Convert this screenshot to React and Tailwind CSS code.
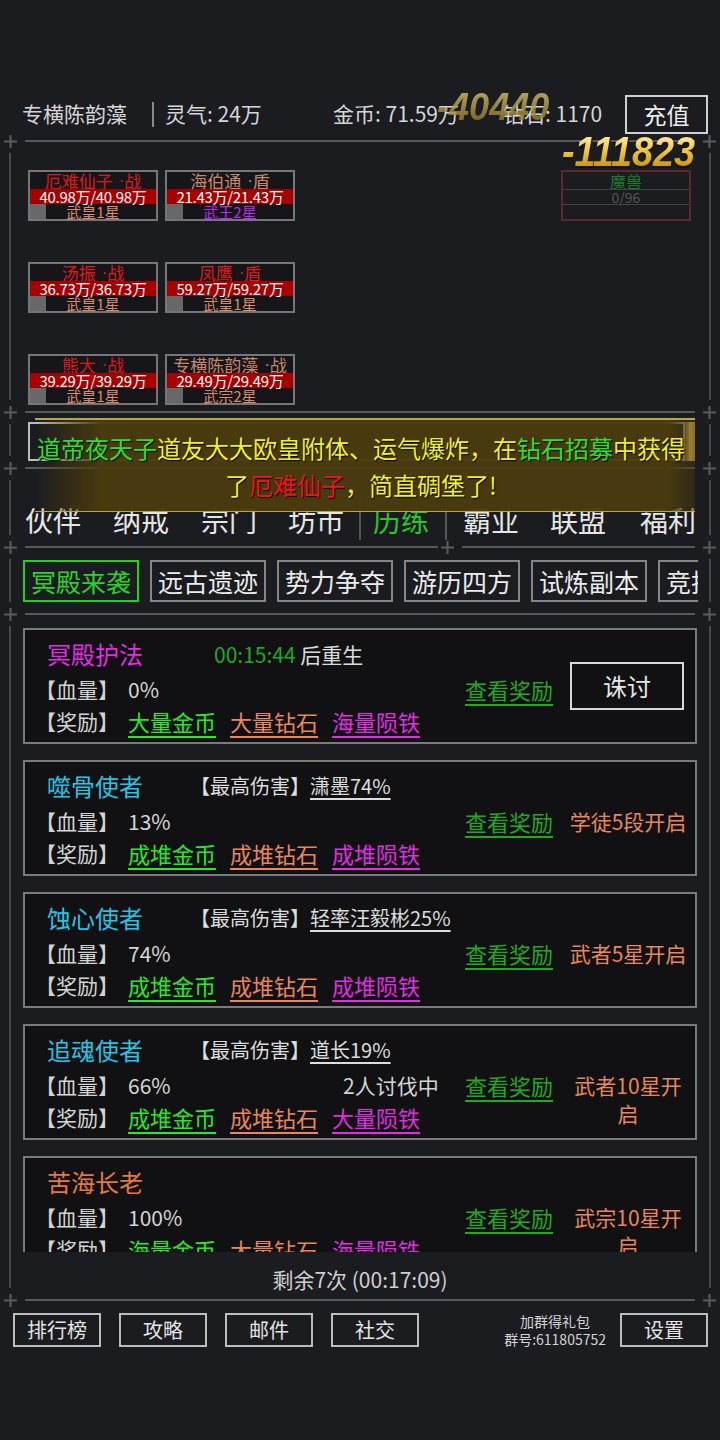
import React from "react";

const RED = "text-[#e01818]";
const TAN = "text-[#c9876a]";
const RANK = "text-[#d98b6b]";

const PARTY = [
  { name: "厄难仙子", role: "战", nameColor: RED, hp: "40.98万/40.98万", rank: "武皇1星", rankColor: RANK },
  { name: "海伯通", role: "盾", nameColor: TAN, hp: "21.43万/21.43万", rank: "武王2星", rankColor: "text-[#b52ee6]" },
  { name: "汤振", role: "战", nameColor: RED, hp: "36.73万/36.73万", rank: "武皇1星", rankColor: RANK },
  { name: "凤鹰", role: "盾", nameColor: RED, hp: "59.27万/59.27万", rank: "武皇1星", rankColor: RANK },
  { name: "熊大", role: "战", nameColor: RED, hp: "39.29万/39.29万", rank: "武皇1星", rankColor: RANK },
  { name: "专横陈韵藻", role: "战", nameColor: TAN, hp: "29.49万/29.49万", rank: "武宗2星", rankColor: RANK },
];

const GREEN = "text-[#25ea25] decoration-[#25ea25]";
const SALMON = "text-[#e8875a] decoration-[#e8875a]";
const MAGENTA = "text-[#e02ee0] decoration-[#e02ee0]";
const CYAN = "text-[#27c4e4]";

const BOSSES = [
  {
    title: "冥殿护法",
    color: "text-[#e02ee0]",
    timer: "00:15:44",
    hp: "0%",
    rewards: [["大量金币", GREEN], ["大量钻石", SALMON], ["海量陨铁", MAGENTA]],
    button: "诛讨",
  },
  {
    title: "噬骨使者",
    color: CYAN,
    top: "潇墨74%",
    hp: "13%",
    rewards: [["成堆金币", GREEN], ["成堆钻石", SALMON], ["成堆陨铁", MAGENTA]],
    status: "学徒5段开启",
  },
  {
    title: "蚀心使者",
    color: CYAN,
    top: "轻率汪毅彬25%",
    hp: "74%",
    rewards: [["成堆金币", GREEN], ["成堆钻石", SALMON], ["成堆陨铁", MAGENTA]],
    status: "武者5星开启",
  },
  {
    title: "追魂使者",
    color: CYAN,
    top: "道长19%",
    hp: "66%",
    note: "2人讨伐中",
    rewards: [["成堆金币", GREEN], ["成堆钻石", SALMON], ["大量陨铁", MAGENTA]],
    status: "武者10星开启",
  },
  {
    title: "苦海长老",
    color: "text-[#e67a3c]",
    hp: "100%",
    rewards: [["海量金币", GREEN], ["大量钻石", SALMON], ["海量陨铁", MAGENTA]],
    status: "武宗10星开启",
  },
];

const SUBTABS = ["冥殿来袭", "远古遗迹", "势力争夺", "游历四方", "试炼副本", "竞技大赛"];

function Cross() {
  return (
    <svg width="13" height="13" viewBox="0 0 13 13" className="shrink-0">
      <path d="M0 6.5H13M6.5 0V13" stroke="#5c5c5c" strokeWidth="2" />
    </svg>
  );
}

function Divider({ mid }) {
  return (
    <div className="flex items-center h-[14px]">
      <div className="w-[4px]" />
      <Cross />
      <div className="w-[8px]" />
      {mid ? (
        <>
          <div className="w-[413px] h-[2px] bg-[#585858]" />
          <div className="w-[3px]" />
          <Cross />
          <div className="w-[8px]" />
          <div className="flex-1 h-[2px] bg-[#585858]" />
        </>
      ) : (
        <div className="flex-1 h-[2px] bg-[#585858]" />
      )}
      <div className="w-[8px]" />
      <Cross />
      <div className="w-[4px]" />
    </div>
  );
}

function Rails({ children, className = "" }) {
  return (
    <div className="flex">
      <div className="w-[2px] ml-[9px] my-[5px] bg-[#4a4a4a] shrink-0" />
      <div className={`flex-1 min-w-0 ${className}`}>{children}</div>
      <div className="w-[2px] mr-[9px] my-[5px] bg-[#4a4a4a] shrink-0" />
    </div>
  );
}

function PartyCard({ p }) {
  return (
    <div className="h-[51px] border-2 border-[#767676] bg-[#16161a] flex flex-col">
      <div className={`h-[18px] flex items-center justify-center text-[17px] leading-none ${p.nameColor}`}>
        {p.name}
        <span className="ml-[6px] font-['Liberation_Sans',sans-serif]">·</span>
        {p.role}
      </div>
      <div className="h-[15px] bg-[#a60000] flex items-center justify-center text-[15px] leading-none text-white tracking-[-0.3px]">
        {p.hp}
      </div>
      <div className="flex-1 flex items-center">
        <div className="w-[16px] self-stretch bg-[#686868]" />
        <div className={`flex-1 pr-[16px] text-center text-[15px] leading-none ${p.rankColor}`}>{p.rank}</div>
      </div>
    </div>
  );
}

function MonsterCard() {
  return (
    <div className="w-[130px] h-[51px] border-2 border-[#5a2828] flex flex-col">
      <div className="h-[17px] flex items-center justify-center text-[16px] leading-none text-[#1d7a2e]">魔兽</div>
      <div className="h-[1px] bg-[#444]" />
      <div className="h-[14px] flex items-center justify-center text-[14px] leading-none text-[#555]">0/96</div>
      <div className="h-[1px] bg-[#444]" />
    </div>
  );
}

function BossCard({ b }) {
  return (
    <div className="h-[116px] shrink-0 border-2 border-[#7a7a7a] bg-[#111113] flex flex-col pt-[6px] pl-[10px]">
      <div className="h-[36px] flex items-center">
        <span className={`ml-[12px] w-[143px] text-[24px] leading-none ${b.color}`}>{b.title}</span>
        {b.timer && (
          <span className="ml-[24px] text-[21px] leading-none">
            <span className="text-[#22a822]">{b.timer}</span>
            <span className="text-[#dcdcdc]"> 后重生</span>
          </span>
        )}
        {b.top && (
          <span className="text-[20px] leading-none text-[#dcdcdc]">
            【最高伤害】<span className="underline underline-offset-[4px] decoration-[1.5px]">{b.top}</span>
          </span>
        )}
      </div>
      <div className="h-[34px] flex items-center text-[#d4d4d4]">
        <span className="w-[93px] text-[21px] leading-none">【血量】</span>
        <span className="w-[215px] text-[21px] leading-none">{b.hp}</span>
        <span className="w-[122px] text-[21px] leading-none">{b.note}</span>
        <span className="w-[101px] text-[22px] leading-none text-[#22a822] underline underline-offset-[5px] decoration-[1.5px] decoration-[#22a822]">
          查看奖励
        </span>
        {b.button ? (
          <div className="w-[114px] h-[48px] ml-[4px] -mt-[6px] border-2 border-[#d8d8d8] flex items-center justify-center text-[24px] text-[#e6e6e6]">
            {b.button}
          </div>
        ) : (
          <div className="w-[124px] h-[34px] pt-[3px] text-center text-[21px] leading-[28px] text-[#e8875a]">{b.status}</div>
        )}
      </div>
      <div className="h-[30px] flex items-center">
        <span className="w-[93px] text-[21px] leading-none text-[#d4d4d4]">【奖励】</span>
        <div className="flex gap-[14px]">
          {b.rewards.map(([t, c]) => (
            <span key={t} className={`text-[22px] leading-none underline underline-offset-[5px] decoration-[1.5px] ${c}`}>
              {t}
            </span>
          ))}
        </div>
      </div>
    </div>
  );
}

export default function App() {
  return (
    <div className="relative w-[720px] h-[1440px] overflow-hidden bg-[#1b1c20] text-[#dedede] font-['Noto_Sans_CJK_SC','Noto_Sans',sans-serif]">
      <div className="h-[94px]" />

      {/* top status bar */}
      <div className="flex items-center h-[40px] text-[21px] text-[#d6d6d6]">
        <span className="ml-[22px]">专横陈韵藻</span>
        <div className="ml-[25px] w-[2px] h-[25px] bg-[#8a8a8a]" />
        <span className="ml-[11px] w-[168px]">灵气: 24万</span>
        <span className="w-[170px]">金币: 71.59万</span>
        <span>钻石: 1170</span>
        <div className="ml-auto mr-[12px] w-[83px] h-[39px] border-2 border-[#d0d0d0] flex items-center justify-center text-[23px] text-[#eee]">
          充值
        </div>
      </div>

      <Divider />

      {/* party */}
      <Rails>
        <div className="flex h-[257px] pt-[22px]">
          <div className="ml-[17px] grid grid-cols-[130px_130px] gap-x-[7px] gap-y-[41px] content-start">
            {PARTY.map((p) => (
              <PartyCard key={p.name} p={p} />
            ))}
          </div>
          <div className="ml-auto mr-[18px]">
            <MonsterCard />
          </div>
        </div>
      </Rails>

      <Divider />

      {/* chat bar */}
      <Rails>
        <div className="h-[42px] pt-[3px] flex">
          <div className="ml-[17px] flex-1 h-[39px] border-2 border-[#bdbdbd]" />
          <div className="w-[10px] h-[39px] mr-[14px] bg-[linear-gradient(90deg,#8a6a20,#e8c060,#b88a30)]" />
        </div>
      </Rails>

      <Divider />

      {/* main nav */}
      <Rails>
        <div className="h-[65px] pt-[25px]">
          <div className="h-[40px] flex items-center text-[28px] leading-none text-[#e6e6e6]">
            <span className="ml-[14px]">伙伴</span>
            <span className="ml-[32px]">纳戒</span>
            <span className="ml-[32px]">宗门</span>
            <span className="ml-[31px]">坊市</span>
            <div className="ml-[15px] w-[2px] h-[40px] self-end bg-[#555]" />
            <span className="ml-[12px] text-[#27c827]">历练</span>
            <div className="ml-[16px] w-[2px] h-[40px] self-end bg-[#555]" />
            <span className="ml-[16px]">霸业</span>
            <span className="ml-[31px]">联盟</span>
            <span className="ml-[34px]">福利</span>
          </div>
        </div>
      </Rails>

      <Divider mid />

      {/* sub tabs */}
      <Rails>
        <div className="pt-[6px] pb-[5px]">
          <div className="ml-[12px] mr-[11px] flex gap-[11px] overflow-hidden">
            {SUBTABS.map((t, i) => (
              <div
                key={t}
                className={`w-[116px] h-[42px] shrink-0 border-2 flex items-center justify-center text-[25px] leading-none whitespace-nowrap ${
                  i === 0 ? "border-[#1fd21f] text-[#2ad42a]" : "border-[#858585] text-[#ececec]"
                }`}
              >
                {t}
              </div>
            ))}
          </div>
        </div>
      </Rails>

      <Divider />

      {/* boss list */}
      <Rails>
        <div className="h-[631px] overflow-hidden pt-[7px] px-[12px] flex flex-col gap-[16px]">
          {BOSSES.map((b) => (
            <BossCard key={b.title} b={b} />
          ))}
        </div>
        <div className="h-[41px] pt-[13px] text-center text-[21px] leading-[28px] text-[#d0d0d0]">剩余7次 (00:17:09)</div>
      </Rails>

      <Divider />

      {/* bottom bar */}
      <div className="mt-[6px] h-[34px] flex items-center">
        <div className="ml-[13px] flex gap-[18px]">
          {["排行榜", "攻略", "邮件", "社交"].map((t) => (
            <div key={t} className="w-[88px] h-[34px] border-2 border-[#bdbdbd] flex items-center justify-center text-[20px] text-[#e4e4e4]">
              {t}
            </div>
          ))}
        </div>
        <div className="ml-auto mr-[14px] text-center text-[14px] leading-[18px] text-[#d4d4d4]">
          <div>加群得礼包</div>
          <div>群号:611805752</div>
        </div>
        <div className="mr-[12px] w-[88px] h-[34px] border-2 border-[#bdbdbd] flex items-center justify-center text-[20px] text-[#e4e4e4]">
          设置
        </div>
      </div>

      {/* floating damage numbers */}
      <div className="absolute left-[437px] top-[88px] origin-left scale-x-[0.95] font-['Liberation_Sans',sans-serif] font-bold italic text-[38px] leading-none opacity-80 bg-linear-to-b from-[#e2cf78] to-[#86701f] bg-clip-text text-transparent">
        -40440
      </div>
      <div className="absolute left-[562px] top-[131px] origin-left scale-x-[0.9] font-['Liberation_Sans',sans-serif] font-bold italic text-[42px] leading-none drop-shadow-[1px_2px_0_#1a1200] bg-linear-to-b from-[#fff5b0] via-[#f0c431] to-[#b98400] bg-clip-text text-transparent">
        -111823
      </div>

      {/* recruit announcement banner */}
      <div className="absolute left-[35px] top-[418px] w-[660px] h-[94px] pt-[9px] pr-[8px] border-t-2 border-b border-[#bca83a] bg-[linear-gradient(90deg,rgba(74,59,14,0)_0%,rgba(74,59,14,0.96)_10%,rgba(74,59,14,0.96)_96%,rgba(74,59,14,0.4)_100%)] text-center text-[24px] leading-[37px] text-[#f2f02a] [text-shadow:1px_1px_1px_#000]">
        <span className="text-[#2ee02e]">道帝夜天子</span>道友大大欧皇附体、运气爆炸，在<span className="text-[#2ee02e]">钻石招募</span>中获得了
        <span className="text-[#f01818]">厄难仙子</span>，简直碉堡了!
      </div>
    </div>
  );
}
